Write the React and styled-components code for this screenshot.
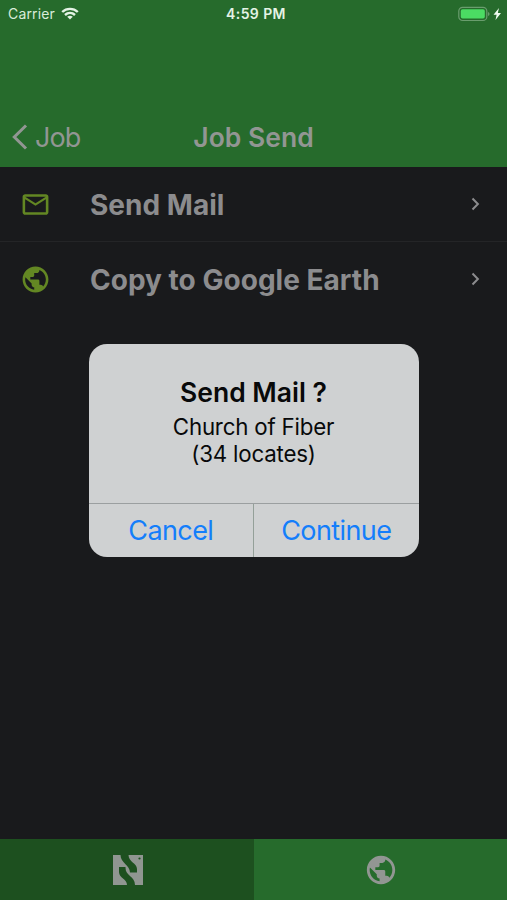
import React from 'react';
import styled, { createGlobalStyle } from 'styled-components';
import { MdMailOutline, MdPublic } from 'react-icons/md';

const GlobalStyle = createGlobalStyle`
    * {
        box-sizing: border-box;
    }

    body {
        margin: 0;
        background: #191a1c;
        font-family: Inter, "Liberation Sans", sans-serif;
    }

    button {
        padding: 0;
        border: none;
        background: none;
        font-family: inherit;
    }
`;

const Screen = styled.div`
    position: relative;
    display: flex;
    flex-direction: column;
    width: 507px;
    height: 900px;
    overflow: hidden;
    background: #191a1c;
`;

const Header = styled.header`
    display: flex;
    flex-direction: column;
    justify-content: space-between;
    height: 167px;
    background: #266b2c;
`;

const StatusBar = styled.div`
    display: grid;
    grid-template-columns: 1fr auto 1fr;
    align-items: center;
    height: 27px;
    padding: 0 5px 0 8px;
    color: #d9ecda;
    font-size: 14px;
`;

const Carrier = styled.div`
    display: flex;
    align-items: center;
    gap: 6px;
    letter-spacing: 0.15px;
`;

const Clock = styled.div`
    padding-left: 2px;
    font-weight: 600;
    letter-spacing: 0.4px;
    color: #e4f3e5;
`;

const Power = styled.div`
    display: flex;
    align-items: center;
    justify-content: flex-end;
`;

const NavBar = styled.div`
    display: grid;
    grid-template-columns: 1fr auto 1fr;
    align-items: center;
    height: 60px;
    padding: 0 12px;
    color: #929693;
`;

const BackButton = styled.button`
    display: flex;
    align-items: center;
    gap: 7px;
    color: inherit;
    font-size: 27px;
    letter-spacing: -0.9px;
`;

const Title = styled.h1`
    margin: 0;
    font-size: 26.5px;
    font-weight: 600;
    letter-spacing: 0;
`;

const List = styled.main`
    flex: 1;
`;

const Row = styled.div`
    display: flex;
    align-items: center;
    height: 75px;
    padding: 0 27px 0 20px;
    border-bottom: 1px solid ${props => props.$last ? 'transparent' : '#242527'};
    color: #8c8c8e;

    > svg:first-child {
        color: #638723;
    }
`;

const RowLabel = styled.span`
    flex: 1;
    margin-left: 39px;
    padding-top: 2px;
    font-size: 28px;
    font-weight: 700;
    letter-spacing: 0.02px;
`;

const Tabs = styled.nav`
    display: flex;
    height: 61px;
`;

const Tab = styled.button`
    display: flex;
    flex: 1;
    align-items: center;
    justify-content: center;
    padding-left: 2px;
    background: ${props => props.$active ? '#1d501f' : '#266b2c'};
    color: #929693;
`;

const Overlay = styled.div`
    position: absolute;
    inset: 0;
    display: flex;
    align-items: center;
    justify-content: center;
`;

const Alert = styled.div`
    display: flex;
    flex-direction: column;
    width: 330px;
    height: 213px;
    overflow: hidden;
    border-radius: 18px;
    background: #cfd1d2;
    color: #08090a;
    text-align: center;
`;

const AlertBody = styled.div`
    flex: 1;
    padding-top: 32px;
`;

const AlertTitle = styled.h2`
    margin: 0;
    font-size: 26.5px;
    font-weight: 600;
    line-height: 33px;
    letter-spacing: 0;
`;

const AlertText = styled.p`
    margin: 4px 0 0;
    font-size: 22.3px;
    line-height: 27px;
    letter-spacing: -0.2px;
    white-space: pre-line;
`;

const AlertActions = styled.div`
    display: flex;
    height: 54px;
    border-top: 1px solid #9b9fa0;
`;

const AlertButton = styled.button`
    flex: 1;
    color: #147efb;
    font-size: 27px;
    letter-spacing: -0.6px;

    & + & {
        border-left: 1px solid #94a099;
    }
`;

function WifiIcon() {
    return (
        <svg width="18" height="13" viewBox="0 0 18 13" fill="none" stroke="#e4f3e5" strokeWidth="2.4">
            <path d="M1.2 5C5.6.8 12.4.8 16.8 5" />
            <path d="M4 8C6.9 5.3 11.1 5.3 14 8" />
            <path d="M6.2 9.8Q9 7.8 11.8 9.8L9 12.6Z" fill="#e4f3e5" stroke="none" />
        </svg>
    );
}

function BatteryIcon() {
    return (
        <svg width="44" height="16" viewBox="0 0 44 16">
            <rect x="0.8" y="1.3" width="28" height="13.2" rx="3.8" fill="none" stroke="#6a9d6e" strokeWidth="1.2" />
            <rect x="2.8" y="3.2" width="24" height="9.4" rx="1.8" fill="#4bdc63" />
            <path d="M30 6v4q1.6-.5 1.6-2T30 6Z" fill="#6a9d6e" />
            <path d="M41 2L35.5 8.8H38.6L37.5 14L43 7.1H39.8Z" fill="#f0faf0" />
        </svg>
    );
}

function BackIcon() {
    return (
        <svg width="16" height="26" viewBox="0 0 16 26" fill="none" stroke="currentColor" strokeWidth="3">
            <path d="M14 1.5L2.3 13L14 24.5" />
        </svg>
    );
}

function ChevronIcon() {
    return (
        <svg width="9" height="14" viewBox="0 0 9 14" fill="none" stroke="currentColor" strokeWidth="2">
            <path d="M1.5 1.5L6.9 7L1.5 12.5" />
        </svg>
    );
}

function LogoIcon() {
    return (
        <svg width="30" height="30" viewBox="0 0 30 30">
            <path
                fill="#909691"
                fillRule="evenodd"
                d="M0 0H30V30H0Z M7.5 0C7.5 8 17 10 17 17.5H24V14C24 8 15.5 7 15.5 0Z M6 12V17C6 23 14 24 14 30H22C22 21 12.5 21 12.5 13V12Z"
            />
            <circle cx="26.5" cy="3.5" r="1.1" fill="#1d501f" />
        </svg>
    );
}

const rows = [
    { label: 'Send Mail', icon: MdMailOutline },
    { label: 'Copy to Google Earth', icon: MdPublic },
];

function App() {
    return (
        <>
            <GlobalStyle />
            <Screen>
                <Header>
                    <StatusBar>
                        <Carrier>
                            Carrier
                            <WifiIcon />
                        </Carrier>
                        <Clock>4:59 PM</Clock>
                        <Power>
                            <BatteryIcon />
                        </Power>
                    </StatusBar>
                    <NavBar>
                        <BackButton>
                            <BackIcon />
                            Job
                        </BackButton>
                        <Title>Job Send</Title>
                    </NavBar>
                </Header>

                <List>
                    {rows.map(({ label, icon: Icon }, i) => (
                        <Row key={label} $last={i === rows.length - 1}>
                            <Icon size={31} />
                            <RowLabel>{label}</RowLabel>
                            <ChevronIcon />
                        </Row>
                    ))}
                </List>

                <Tabs>
                    <Tab $active>
                        <LogoIcon />
                    </Tab>
                    <Tab>
                        <MdPublic size={34} />
                    </Tab>
                </Tabs>

                <Overlay>
                    <Alert role="alertdialog">
                        <AlertBody>
                            <AlertTitle>Send Mail ?</AlertTitle>
                            <AlertText>{'Church of Fiber\n(34 locates)'}</AlertText>
                        </AlertBody>
                        <AlertActions>
                            <AlertButton>Cancel</AlertButton>
                            <AlertButton>Continue</AlertButton>
                        </AlertActions>
                    </Alert>
                </Overlay>
            </Screen>
        </>
    );
}

export default App;
